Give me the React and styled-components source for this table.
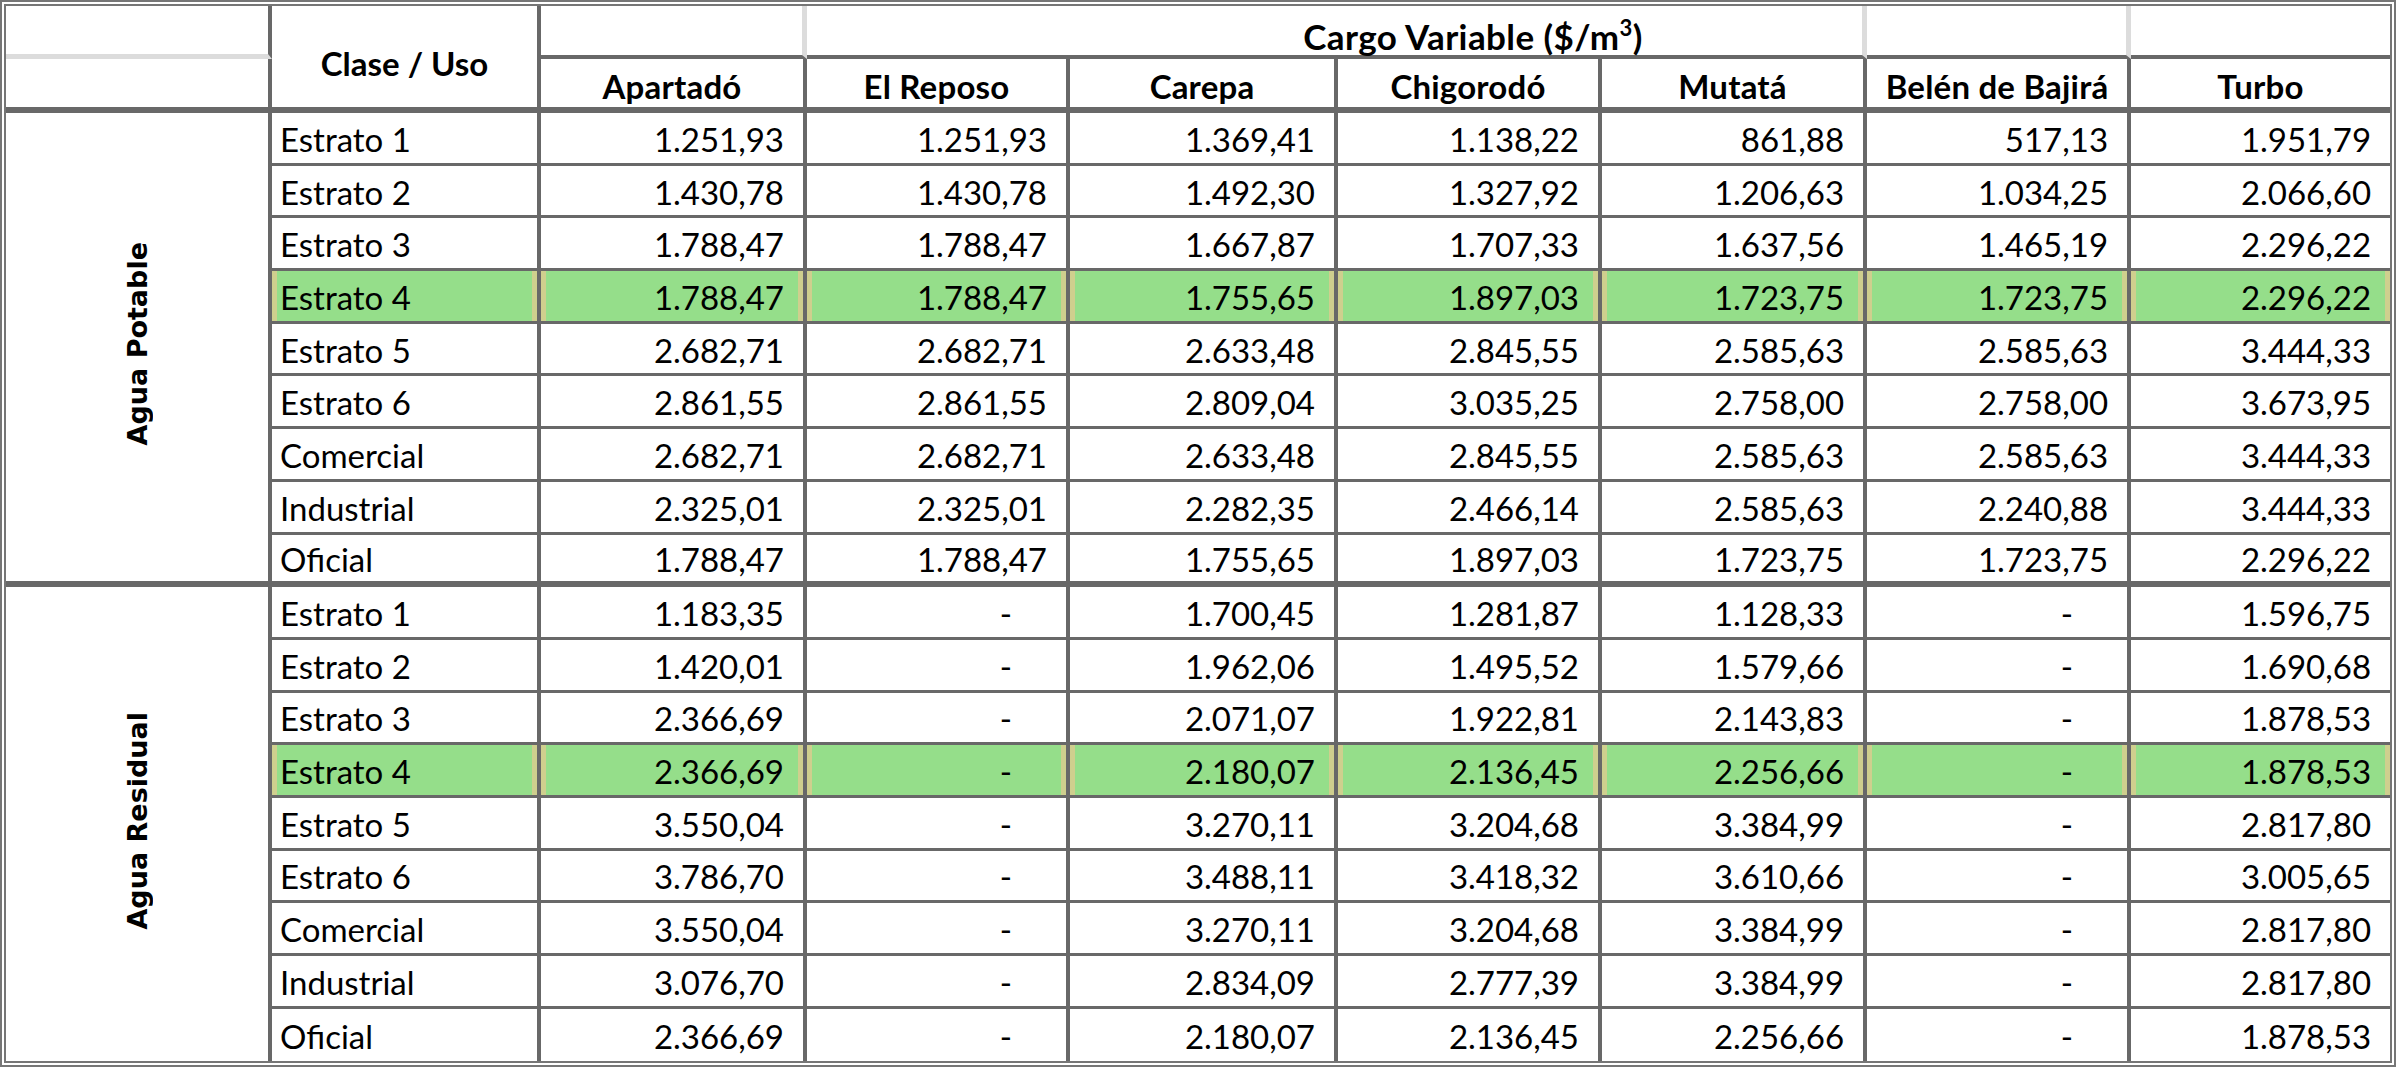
import React from 'react';
import styled, { createGlobalStyle, css } from 'styled-components';

const Global = createGlobalStyle`
  html, body { margin: 0; padding: 0; background: #ffffff; }
  body { font-family: Lato, "Liberation Sans", sans-serif; }
`;

const LINE = '#686868';
const LIGHT = '#dcdcdc';
const GREEN = '#95de8a';
const KHAKI = '#cfcf8e';

const Page = styled.main`
  width: 2401px;
  height: 1072px;
  background: #ffffff;
`;

const Table = styled.table`
  border-collapse: separate;
  border-spacing: 0;
  table-layout: fixed;
  width: 2396px;
  border: 6px double #767676;
  font-family: Lato, "Liberation Sans", sans-serif;
  font-size: 33px;
  color: #000000;
`;

const Col = styled.col`
  width: ${(p) => p.$w}px;
`;

const HeadRowTop = styled.tr`
  height: 53px;
`;

const HeadRowCities = styled.tr`
  height: 54px;
`;

const DataRow = styled.tr`
  height: 52.7px;
`;

const bottomBorder = {
  row: `3px solid ${LINE}`,
  group: `6px solid ${LINE}`,
  head: `4px solid ${LINE}`,
  light: `5px solid ${LIGHT}`,
  none: 'none',
};

const baseCell = css`
  box-sizing: border-box;
  padding: 0;
  overflow: visible;
  white-space: nowrap;
  border-right: ${(p) =>
    p.$right === 'none' ? 'none' : p.$right === 'light' ? `5px solid ${LIGHT}` : `4px solid ${LINE}`};
  border-bottom: ${(p) => bottomBorder[p.$bottom || 'row']};
`;

const CornerCell = styled.td`
  ${baseCell}
`;

const ClaseHead = styled.th`
  ${baseCell}
  font-weight: 700;
  text-align: center;
  vertical-align: middle;
  padding-top: 12px;
`;

const TitleCell = styled.td`
  ${baseCell}
  font-weight: 700;
  font-size: 35px;
  letter-spacing: 0.4px;
  text-align: center;
  vertical-align: bottom;
  padding-left: 277px;
  line-height: 1.05;
`;

const Sup = styled.sup`
  font-size: 22px;
  vertical-align: 14px;
  line-height: 0;
`;

const CityHead = styled.th`
  ${baseCell}
  font-weight: 700;
  letter-spacing: 0.2px;
  text-align: center;
  vertical-align: middle;
  padding-top: 6px;
`;

const GroupCell = styled.td`
  ${baseCell}
  text-align: center;
  vertical-align: middle;
`;

const GroupLabel = styled.span`
  display: inline-block;
  writing-mode: vertical-rl;
  transform: rotate(180deg);
  font-family: "DejaVu Sans", Verdana, sans-serif;
  font-weight: 700;
  font-size: 27px;
  white-space: nowrap;
`;

const highlight = css`
  background: ${GREEN};
  box-shadow: inset 5px 0 0 ${KHAKI}, inset -5px 0 0 ${KHAKI};
`;

const ClassCell = styled.td`
  ${baseCell}
  text-align: left;
  vertical-align: middle;
  padding-left: 8px;
  padding-top: 2px;
  ${(p) => p.$hl && highlight}
`;

const ValueCell = styled.td`
  ${baseCell}
  text-align: right;
  vertical-align: middle;
  padding-top: 2px;
  padding-right: ${(p) => (p.$dash ? 54 : 19)}px;
  ${(p) => p.$hl && highlight}
`;

const widths = [266, 269, 266, 263, 268, 264, 265, 264, 259];
const cities = ['Apartadó', 'El Reposo', 'Carepa', 'Chigorodó', 'Mutatá', 'Belén de Bajirá', 'Turbo'];

const groups = [
  {
    name: 'Agua Potable',
    rows: [
      ['Estrato 1', '1.251,93', '1.251,93', '1.369,41', '1.138,22', '861,88', '517,13', '1.951,79'],
      ['Estrato 2', '1.430,78', '1.430,78', '1.492,30', '1.327,92', '1.206,63', '1.034,25', '2.066,60'],
      ['Estrato 3', '1.788,47', '1.788,47', '1.667,87', '1.707,33', '1.637,56', '1.465,19', '2.296,22'],
      ['Estrato 4', '1.788,47', '1.788,47', '1.755,65', '1.897,03', '1.723,75', '1.723,75', '2.296,22'],
      ['Estrato 5', '2.682,71', '2.682,71', '2.633,48', '2.845,55', '2.585,63', '2.585,63', '3.444,33'],
      ['Estrato 6', '2.861,55', '2.861,55', '2.809,04', '3.035,25', '2.758,00', '2.758,00', '3.673,95'],
      ['Comercial', '2.682,71', '2.682,71', '2.633,48', '2.845,55', '2.585,63', '2.585,63', '3.444,33'],
      ['Industrial', '2.325,01', '2.325,01', '2.282,35', '2.466,14', '2.585,63', '2.240,88', '3.444,33'],
      ['Oficial', '1.788,47', '1.788,47', '1.755,65', '1.897,03', '1.723,75', '1.723,75', '2.296,22'],
    ],
  },
  {
    name: 'Agua Residual',
    rows: [
      ['Estrato 1', '1.183,35', '-', '1.700,45', '1.281,87', '1.128,33', '-', '1.596,75'],
      ['Estrato 2', '1.420,01', '-', '1.962,06', '1.495,52', '1.579,66', '-', '1.690,68'],
      ['Estrato 3', '2.366,69', '-', '2.071,07', '1.922,81', '2.143,83', '-', '1.878,53'],
      ['Estrato 4', '2.366,69', '-', '2.180,07', '2.136,45', '2.256,66', '-', '1.878,53'],
      ['Estrato 5', '3.550,04', '-', '3.270,11', '3.204,68', '3.384,99', '-', '2.817,80'],
      ['Estrato 6', '3.786,70', '-', '3.488,11', '3.418,32', '3.610,66', '-', '3.005,65'],
      ['Comercial', '3.550,04', '-', '3.270,11', '3.204,68', '3.384,99', '-', '2.817,80'],
      ['Industrial', '3.076,70', '-', '2.834,09', '2.777,39', '3.384,99', '-', '2.817,80'],
      ['Oficial', '2.366,69', '-', '2.180,07', '2.136,45', '2.256,66', '-', '1.878,53'],
    ],
  },
];

export default function App() {
  return (
    <Page>
      <Global />
      <Table>
        <colgroup>
          {widths.map((w, i) => (
            <Col key={i} $w={w} />
          ))}
        </colgroup>
        <thead>
          <HeadRowTop>
            <CornerCell $bottom="light" />
            <ClaseHead rowSpan={2} $bottom="group">
              Clase / Uso
            </ClaseHead>
            <CornerCell $right="light" $bottom="head" />
            <TitleCell colSpan={4} $right="light" $bottom="head">
              Cargo Variable ($/m<Sup>3</Sup>)
            </TitleCell>
            <CornerCell $right="light" $bottom="head" />
            <CornerCell $right="none" $bottom="head" />
          </HeadRowTop>
          <HeadRowCities>
            <CornerCell $bottom="group" />
            {cities.map((c, i) => (
              <CityHead key={c} $bottom="group" $right={i === cities.length - 1 ? 'none' : 'dark'}>
                {c}
              </CityHead>
            ))}
          </HeadRowCities>
        </thead>
        <tbody>
          {groups.map((g, gi) =>
            g.rows.map((r, ri) => {
              const lastInGroup = ri === g.rows.length - 1;
              const lastGroup = gi === groups.length - 1;
              const bottom = lastInGroup ? (lastGroup ? 'none' : 'group') : 'row';
              const hl = r[0] === 'Estrato 4';
              return (
                <DataRow key={`${gi}-${ri}`}>
                  {ri === 0 && (
                    <GroupCell rowSpan={g.rows.length} $bottom={lastGroup ? 'none' : 'group'}>
                      <GroupLabel>{g.name}</GroupLabel>
                    </GroupCell>
                  )}
                  <ClassCell $bottom={bottom} $hl={hl}>
                    {r[0]}
                  </ClassCell>
                  {r.slice(1).map((v, vi) => (
                    <ValueCell
                      key={vi}
                      $bottom={bottom}
                      $hl={hl}
                      $dash={v === '-'}
                      $right={vi === 6 ? 'none' : 'dark'}
                    >
                      {v}
                    </ValueCell>
                  ))}
                </DataRow>
              );
            })
          )}
        </tbody>
      </Table>
    </Page>
  );
}
